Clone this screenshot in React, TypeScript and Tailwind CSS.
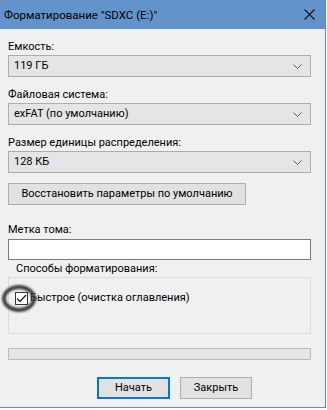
import React from 'react';

const font = { fontFamily: 'Roboto, "Noto Sans", sans-serif' };

function Chevron() {
  return (
    <svg width="9" height="5" viewBox="0 0 9 5" className="shrink-0">
      <path d="M0.5 0.5 L4.5 4.5 L8.5 0.5" fill="none" stroke="#606060" strokeWidth="1" />
    </svg>
  );
}

function Combo({ value }: { value: string }) {
  return (
    <div className="flex h-[22px] w-[303px] items-center justify-between border border-[#adadad] bg-[#e5e5e5] pl-[5px] pr-[8px] text-black">
      <span>{value}</span>
      <Chevron />
    </div>
  );
}

export default function App() {
  return (
    <div className="h-[410px] w-[327px] bg-white text-[11px] leading-[16px] text-black" style={font}>
      <div className="flex h-[408px] w-[326px] flex-col border-b border-r border-[#5a8fcf] bg-[#f0f0f0]">
        {/* Title bar */}
        <div className="flex h-[29px] shrink-0 items-center justify-between bg-[#6393cb] pl-[4px] pr-[10px]">
          <span className="text-[11.5px] text-black">Форматирование "SDXC (E:)"</span>
          <svg width="11" height="11" viewBox="0 0 11 11">
            <path d="M0.5 0.5 L10.5 10.5 M10.5 0.5 L0.5 10.5" stroke="#111" strokeWidth="1.1" />
          </svg>
        </div>

        <div className="flex flex-col pl-[8px]">
          <div className="mt-[10px]">Емкость:</div>
          <Combo value="119 ГБ" />

          <div className="mt-[10px]">Файловая система:</div>
          <Combo value="exFAT (по умолчанию)" />

          <div className="mt-[10px]">Размер единицы распределения:</div>
          <Combo value="128 КБ" />

          <button className="mt-[10px] flex h-[22px] w-[238px] items-center justify-center whitespace-nowrap border border-[#adadad] bg-[#e1e1e1] text-black">
            Восстановить параметры по умолчанию
          </button>

          <div className="mt-[17px]">Метка тома:</div>
          <div className="mt-[1px] h-[21px] w-[303px] border border-[#7a7a7a] bg-white" />

          {/* Group box */}
          <div className="relative mt-[17px] h-[57px] w-[303px] border border-[#dcdcdc]">
            <span className="absolute left-[5px] top-[-17px] bg-[#f0f0f0] px-[2px]">Способы форматирования:</span>
            <div className="mt-[12px] flex items-center pl-[6px]">
              <div className="relative flex h-[13px] w-[13px] items-center justify-center border border-[#333] bg-white">
                <svg width="11" height="9" viewBox="0 0 11 9">
                  <path d="M1 4.5 L4 7.5 L10 1" fill="none" stroke="#222" strokeWidth="1.3" />
                </svg>
                <div className="absolute left-[-14px] top-[-8px] h-[27px] w-[34px] rounded-[50%] border-[4px] border-[#3c3c3c] blur-[1px]" />
              </div>
              <span className="ml-[2px]">Быстрое (очистка оглавления)</span>
            </div>
          </div>

          <div className="mt-[14px] h-[12px] w-[303px] border border-[#bcbcbc] bg-[#e6e6e6]" />

          <div className="mt-[17px] flex gap-[10px] pl-[89px]">
            <button className="flex h-[22px] w-[73px] items-center justify-center border-2 border-[#0078d7] bg-[#e1e1e1] text-black">
              Начать
            </button>
            <button className="flex h-[22px] w-[72px] items-center justify-center border border-[#adadad] bg-[#e1e1e1] text-black">
              Закрыть
            </button>
          </div>
        </div>
      </div>
    </div>
  );
}
